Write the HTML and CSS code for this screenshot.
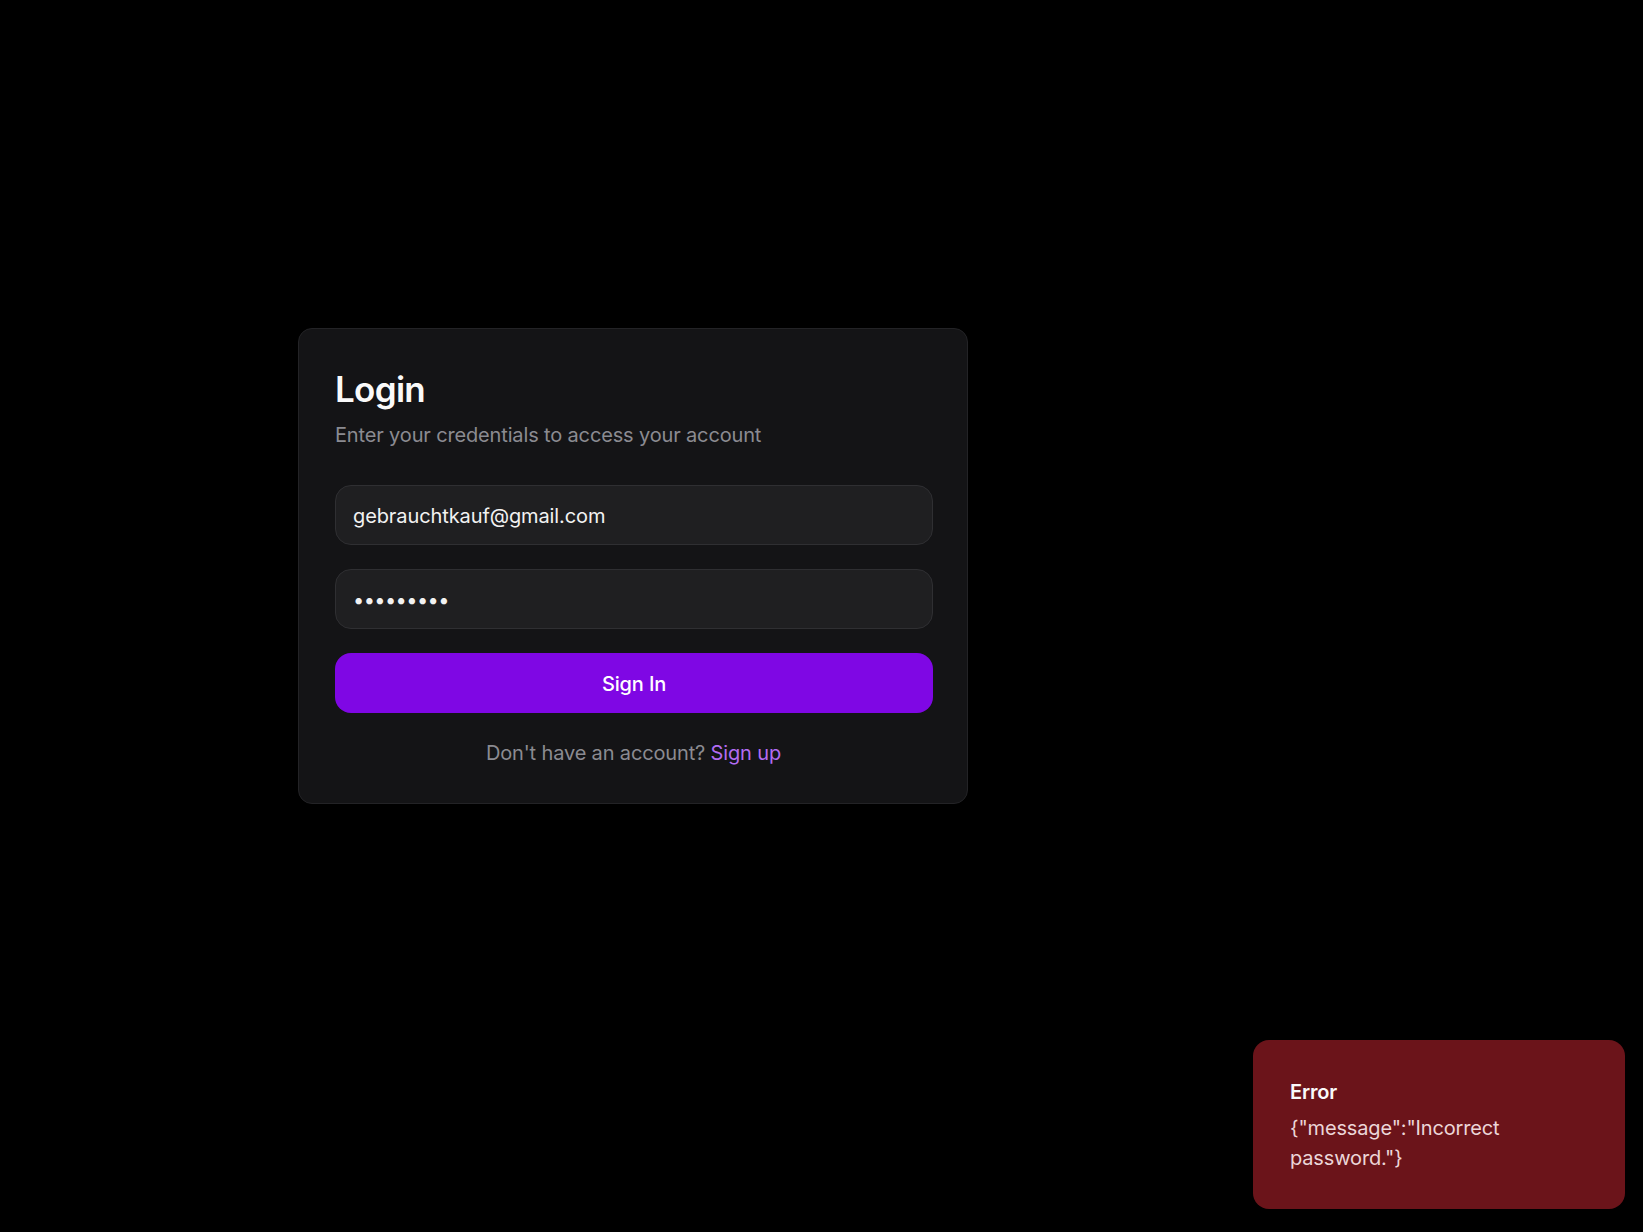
FILE: index.html
```html
<!DOCTYPE html>
<html lang="en">
<head>
<meta charset="utf-8">
<title>Login</title>
<link rel="stylesheet" href="styles.css">
</head>
<body>
<main class="page">
  <section class="card">
    <h1 class="title">Login</h1>
    <p class="subtitle">Enter your credentials to access your account</p>
    <form class="form">
      <input class="field" type="email" value="gebrauchtkauf@gmail.com">
      <input class="field field-pass" type="password" value="123456789">
      <button class="submit" type="button">Sign In</button>
    </form>
    <p class="footer">Don't have an account? <a class="link" href="#">Sign up</a></p>
  </section>
</main>
<div class="toast">
  <div class="toast-title">Error</div>
  <div class="toast-msg">{"message":"Incorrect password."}</div>
</div>
</body>
</html>
```
FILE: styles.css
```css
* { box-sizing: border-box; }
html, body {
  margin: 0;
  padding: 0;
  background: #000;
  height: 100%;
}
body {
  font-family: Inter, "Noto Sans", sans-serif;
  color: #fafafa;
  letter-spacing: -0.15px;
}
.page {
  padding: 328px 0 0 298px;
}
.card {
  width: 670px;
  background: #141416;
  border: 1px solid #232326;
  border-radius: 14px;
  padding: 35px 35px 36px 36px;
}
.title {
  margin: 0;
  font-size: 35px;
  line-height: 50px;
  font-weight: 560;
  letter-spacing: -0.7px;
  color: #fafafa;
}
.subtitle {
  margin: 7px 0 0;
  font-size: 20px;
  line-height: 28px;
  color: #8b8b91;
}
.form {
  display: flex;
  flex-direction: column;
  gap: 24px;
  margin-top: 36px;
}
.field {
  height: 60px;
  width: 598px;
  background: #1f1f21;
  border: 1px solid #2f2f32;
  border-radius: 16px;
  padding: 2px 17px 0;
  font-family: Inter, "Noto Sans", sans-serif;
  font-size: 20px;
  letter-spacing: -0.1px;
  color: #f2f2f2;
  outline: none;
}
.field-pass {
  letter-spacing: -0.6px;
}
.submit {
  height: 60px;
  width: 598px;
  border: none;
  border-radius: 16px;
  background: #7f07e4;
  color: #fff;
  padding-top: 2px;
  font-family: Inter, "Noto Sans", sans-serif;
  font-size: 20px;
  font-weight: 500;
  letter-spacing: -0.15px;
}
.footer {
  margin: 26px 0 0;
  text-align: center;
  font-size: 20px;
  line-height: 28px;
  color: #8b8b91;
}
.link {
  color: #b36cf2;
  text-decoration: none;
}
.toast {
  position: fixed;
  right: 18px;
  bottom: 23px;
  width: 372px;
  background: #6b141a;
  border-radius: 16px;
  padding: 38px 36px 36px 37px;
}
.toast-title {
  font-size: 20px;
  line-height: 28px;
  font-weight: 600;
  color: #fafafa;
}
.toast-msg {
  margin-top: 7px;
  font-size: 20px;
  line-height: 30px;
  color: #ecd6d8;
}
```
